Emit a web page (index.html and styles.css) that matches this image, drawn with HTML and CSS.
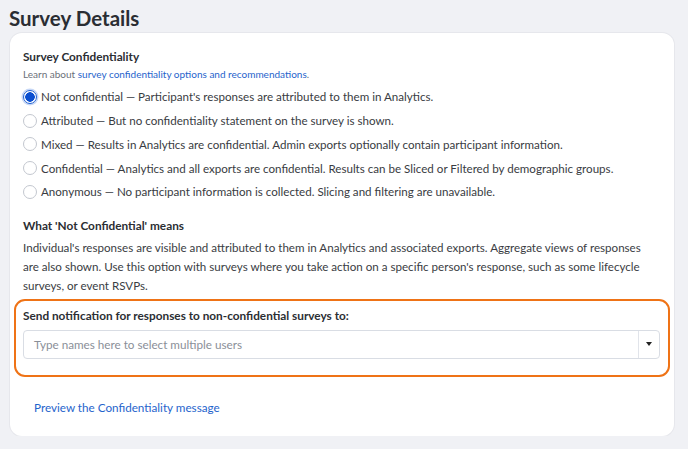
FILE: index.html
```html
<!DOCTYPE html>
<html>
<head>
<meta charset="utf-8">
<link rel="stylesheet" href="styles.css">
</head>
<body>
<div class="page">
  <h1 class="title">Survey Details</h1>
  <div class="card">
    <div class="section-title">Survey Confidentiality</div>
    <div class="learn">Learn about <a class="link" href="#">survey confidentiality options and recommendations</a>.</div>
    <div class="options">
      <label class="option"><span class="radio checked"></span><span>Not confidential — Participant's responses are attributed to them in Analytics.</span></label>
      <label class="option"><span class="radio"></span><span>Attributed — But no confidentiality statement on the survey is shown.</span></label>
      <label class="option"><span class="radio"></span><span>Mixed — Results in Analytics are confidential. Admin exports optionally contain participant information.</span></label>
      <label class="option"><span class="radio"></span><span>Confidential — Analytics and all exports are confidential. Results can be Sliced or Filtered by demographic groups.</span></label>
      <label class="option"><span class="radio"></span><span>Anonymous — No participant information is collected. Slicing and filtering are unavailable.</span></label>
    </div>
    <div class="section-title means">What 'Not Confidential' means</div>
    <p class="desc">Individual's responses are visible and attributed to them in Analytics and associated exports. Aggregate views of responses are also shown. Use this option with surveys where you take action on a specific person's response, such as some lifecycle surveys, or event RSVPs.</p>
    <div class="notify">
      <div class="notify-label">Send notification for responses to non-confidential surveys to:</div>
      <div class="select">
        <span class="placeholder">Type names here to select multiple users</span>
        <span class="caret-box"><span class="caret"></span></span>
      </div>
    </div>
    <div class="preview-row"><a class="link preview" href="#">Preview the Confidentiality message</a></div>
  </div>
</div>
</body>
</html>
```
FILE: styles.css
```css
html, body {
  margin: 0;
  padding: 0;
  background: #f0f1f5;
}
body {
  font-family: Lato, "Open Sans", sans-serif;
  color: #2b2e33;
}
.page {
  padding: 4px 14px 0 10px;
}
.title {
  margin: 0 0 0 -1px;
  font-size: 20.5px;
  font-weight: 700;
  line-height: 28px;
  color: #2a2d33;
}
.card {
  margin-top: 1px;
  background: #fff;
  border-radius: 12px;
  box-shadow: 0 0 0 1px #e6e7ec;
  padding: 16px 13px 0 13px;
  height: 403px;
  box-sizing: border-box;
}
.section-title {
  font-size: 11.8px;
  font-weight: 700;
  line-height: 16px;
  color: #2b2e33;
}
.learn {
  margin-top: 2px;
  font-size: 10px;
  line-height: 14px;
  color: #6b7079;
}
.link {
  color: #1f64cc;
  text-decoration: none;
}
.options {
  margin-top: 4px;
  display: flex;
  flex-direction: column;
}
.option {
  display: flex;
  align-items: center;
  gap: 4px;
  height: 23.75px;
  font-size: 11.6px;
  color: #393c42;
}
.radio {
  width: 12px;
  height: 12px;
  border-radius: 50%;
  border: 1px solid #c3c7cf;
  box-sizing: content-box;
  flex: none;
  background: #fff;
}
.radio.checked {
  border-color: #1f5fd1;
  background: radial-gradient(circle, #0b4fd0 0 4.5px, #fff 5px);
  box-shadow: 0 0 0 1.5px #c6d7f6;
}
.means {
  margin-top: 14px;
}
.desc {
  margin: 4px 0 0 0;
  padding-right: 5px;
  font-size: 11.6px;
  line-height: 19px;
  color: #3a3d43;
}
.notify {
  margin: 4px -9px 0 -9px;
  border: 2.5px solid #ef7316;
  border-radius: 11px;
  padding: 7px 8px 16px 7px;
}
.notify-label {
  font-size: 11.8px;
  font-weight: 700;
  line-height: 16px;
  color: #2b2e33;
}
.select {
  margin-top: 6px;
  height: 29px;
  box-sizing: border-box;
  border: 1px solid #d9dde4;
  border-radius: 4px;
  display: flex;
  align-items: center;
}
.placeholder {
  flex: 1;
  padding-left: 10px;
  font-size: 11.7px;
  color: #8a8f98;
}
.caret-box {
  width: 20px;
  height: 100%;
  border-left: 1px solid #e1e4ea;
  display: flex;
  align-items: center;
  justify-content: center;
}
.caret {
  width: 0;
  height: 0;
  border-left: 3.5px solid transparent;
  border-right: 3.5px solid transparent;
  border-top: 4px solid #222;
}
.preview-row {
  margin: 21px 0 0 11px;
  line-height: 16px;
}
.preview {
  font-size: 11.7px;
}
```
